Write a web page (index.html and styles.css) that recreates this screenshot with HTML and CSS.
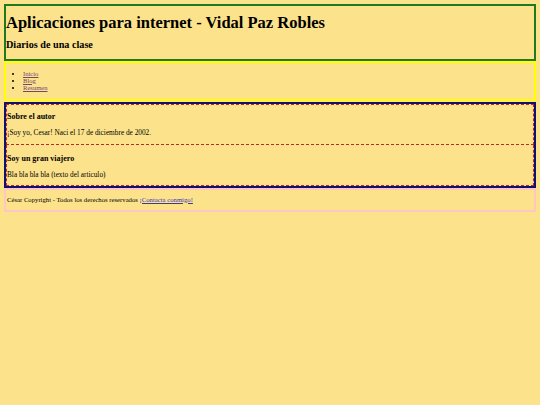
FILE: index.html
```html
<!DOCTYPE html>
<html lang="es">
  <head>
    <meta charset="utf-8" />
    <title>Aplicaciones para internet - Vidal Paz Robles</title>
    <link rel="stylesheet" href="styles.css">
  </head>

  <body>
    <header class="cabecera">
      <h1>Aplicaciones para internet - Vidal Paz Robles</h1>
      <h2>Diarios de una clase</h2>
    </header>

    <nav class="menu">
      <ul>
        <li><a href="#">Inicio</a></li>
        <li><a href="#">Blog</a></li>
        <li><a href="#">Resumen</a></li>
      </ul>
    </nav>

    <main class="contenido">
      <article class="articulo">
        <h3>Sobre el autor</h3>
        <p>¡Soy yo, Cesar! Naci el 17 de diciembre de 2002.</p>
      </article>
      <article class="articulo">
        <h3>Soy un gran viajero</h3>
        <p>Bla bla bla bla (texto del articulo)</p>
      </article>
    </main>

    <footer class="pie">
      <p>César Copyright - Todos los derechos reservados <a href="#">¡Contacta conmigo!</a></p>
    </footer>
  </body>
</html>
```

FILE: styles.css
```css
body {
  font-family: "Liberation Serif", "Times New Roman", serif;
  font-size: 7.3px;
  margin: 4px;
  background-color: #fce38b;
  color: #000;
}
.cabecera {
  border: 2px solid #1f7a1f;
}
.cabecera h1 {
  font-size: 16.5px;
  margin: 7px 0 6px;
}
.cabecera h2 {
  font-size: 10.2px;
  margin: 6px 0 9px;
}
.menu {
  border: 2px solid #ffff00;
}
.menu ul {
  margin: 6.5px 0 8.5px;
  padding-left: 17px;
  font-size: 6.6px;
  line-height: 7px;
}
.menu a {
  color: #74466e;
}
.contenido {
  margin-top: 1px;
  border: 2px solid #101070;
}
.articulo {
  border: 1px dashed #c0282c;
}
.articulo + .articulo {
  border-top: none;
  padding-top: 2px;
}
.articulo h3 {
  font-size: 8px;
  margin: 7px 0;
}
.articulo p {
  margin: 7px 0 6.5px;
}
.pie {
  border: 2px solid #ffc6c6;
  padding: 0 1px;
}
/* pie de página con letra algo menor */
.pie p {
  font-size: 6.7px;
  margin: 5.5px 0 7px;
}
.pie a {
  color: #3a36b0;
}
```
